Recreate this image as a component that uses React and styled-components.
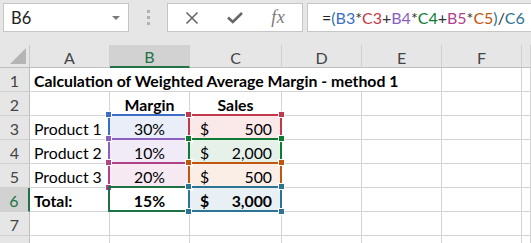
import styled, { createGlobalStyle, css } from "styled-components";

const GlobalStyle = createGlobalStyle`
  body {
    margin: 0;
    background: #fff;
    font-family: Lato, "Liberation Sans", sans-serif;
    overflow: hidden;
  }
`;

const REF = {
  blue: { line: "#3d6dc4", fill: "#e9eef8" },
  red: { line: "#c2394b", fill: "#fbe9ea" },
  purple: { line: "#8a5fbf", fill: "#f0ebf7" },
  green: { line: "#0e7a34", fill: "#e6f2e9" },
  magenta: { line: "#b0428a", fill: "#f7e9f2" },
  orange: { line: "#c1560f", fill: "#fbeee7" },
  teal: { line: "#2b7494", fill: "#e8f0f5" },
};

const formula = [
  ["=", "#222"],
  ["(", REF.teal.line],
  ["B3", REF.blue.line],
  ["*", "#333"],
  ["C3", REF.red.line],
  ["+", "#333"],
  ["B4", REF.purple.line],
  ["*", "#333"],
  ["C4", REF.green.line],
  ["+", "#333"],
  ["B5", REF.magenta.line],
  ["*", "#333"],
  ["C5", REF.orange.line],
  [")", REF.teal.line],
  ["/", "#333"],
  ["C6", REF.teal.line],
];

const columns = ["A", "B", "C", "D", "E", "F", ""];

// each row: [A, B, C] with options
const rows = [
  { n: 1, title: "Calculation of Weighted Average Margin - method 1" },
  { n: 2, a: "", b: "Margin", c: "Sales", head: true },
  { n: 3, a: "Product 1", b: "30%", c: "500", bRef: "blue", cRef: "red" },
  { n: 4, a: "Product 2", b: "10%", c: "2,000", bRef: "purple", cRef: "green" },
  { n: 5, a: "Product 3", b: "20%", c: "500", bRef: "magenta", cRef: "orange" },
  { n: 6, a: "Total:", b: "15%", c: "3,000", total: true, cRef: "teal" },
  { n: 7 },
  { n: 8, hideNum: true },
];

function App() {
  return (
    <>
      <GlobalStyle />
      <Toolbar>
        <NameBox>
          <span>B6</span>
          <Caret />
        </NameBox>
        <Grip>
          <i />
          <i />
          <i />
        </Grip>
        <ButtonBox>
          <IconSlot>
            <svg width="14" height="14" viewBox="0 0 14 14">
              <path d="M1.5 1.5 L12.5 12.5 M12.5 1.5 L1.5 12.5" stroke="#666" strokeWidth="1.6" fill="none" />
            </svg>
          </IconSlot>
          <IconSlot>
            <svg width="16" height="13" viewBox="0 0 16 13">
              <path d="M1 6.5 L5.8 11 L15 2" stroke="#666" strokeWidth="2.6" fill="none" />
            </svg>
          </IconSlot>
          <IconSlot>
            <Fx>fx</Fx>
          </IconSlot>
        </ButtonBox>
        <FormulaBox>
          {formula.map(([t, c], i) => (
            <span key={i} style={{ color: c }}>
              {t}
            </span>
          ))}
        </FormulaBox>
      </Toolbar>

      <Sheet>
        <Corner>
          <svg width="16" height="16" viewBox="0 0 16 16">
            <path d="M16 0 L16 16 L0 16 Z" fill="#b5b5b5" />
          </svg>
        </Corner>
        {columns.map((c) => (
          <ColHead key={c || "x"} selected={c === "B"}>
            {c}
          </ColHead>
        ))}

        {rows.map((r) => (
          <Row key={r.n} r={r} />
        ))}
      </Sheet>
    </>
  );
}

function Row({ r }) {
  const rest = r.title ? 2 : 4;
  return (
    <>
      <RowHead selected={r.n === 6}>{r.hideNum ? "" : r.n}</RowHead>
      {r.title ? (
        <Cell span={5}>
          <Title>{r.title}</Title>
        </Cell>
      ) : (
        <>
          <Cell bold={r.total}>{r.a}</Cell>
          <Cell align="center" bold={r.head || r.total} refc={r.bRef}>
            {r.b}
            {r.bRef && <Highlight color={REF[r.bRef].line} />}
            {r.total && <ActiveBorder />}
          </Cell>
          <Cell align={r.head ? "center" : "money"} bold={r.head || r.total} refc={r.cRef}>
            {r.c && !r.head && <span>$</span>}
            {r.c && <span>{r.c}</span>}
            {r.cRef && <Highlight color={REF[r.cRef].line} />}
          </Cell>
        </>
      )}
      {Array.from({ length: rest }).map((_, i) => (
        <Cell key={i} />
      ))}
    </>
  );
}

function Highlight({ color }) {
  return (
    <Frame color={color}>
      <Dot color={color} pos="tl" />
      <Dot color={color} pos="tr" />
      <Dot color={color} pos="bl" />
      <Dot color={color} pos="br" />
    </Frame>
  );
}

const Toolbar = styled.div`
  height: 45px;
  background: #e6e6e6;
  display: flex;
  align-items: flex-start;
  padding: 3px 0 0 3px;
  box-sizing: border-box;
`;

const Box = styled.div`
  height: 29px;
  box-sizing: border-box;
  background: #fff;
  border: 1px solid #c6c6c6;
  display: flex;
  align-items: center;
  font-size: 16.5px;
  color: #222;
`;

const NameBox = styled(Box)`
  width: 126px;
  padding: 0 8px 0 7px;
  justify-content: space-between;
`;

const Caret = styled.div`
  width: 0;
  height: 0;
  border-left: 4px solid transparent;
  border-right: 4px solid transparent;
  border-top: 4px solid #7a7a7a;
`;

const Grip = styled.div`
  width: 38px;
  height: 29px;
  display: flex;
  flex-direction: column;
  align-items: center;
  justify-content: center;
  gap: 3px;
  i {
    width: 3px;
    height: 3px;
    background: #b0b0b0;
  }
`;

const ButtonBox = styled(Box)`
  width: 136px;
  justify-content: space-around;
  padding: 0 2px;
`;

const IconSlot = styled.div`
  width: 45px;
  display: flex;
  justify-content: center;
  align-items: center;
`;

const Fx = styled.span`
  font-family: "Liberation Serif", serif;
  font-style: italic;
  font-size: 18px;
  color: #7a7a7a;
  letter-spacing: 0.5px;
`;

const FormulaBox = styled(Box)`
  flex: 1;
  margin-left: 4px;
  border-right: none;
  padding-left: 14px;
  white-space: nowrap;
  font-size: 16px;
`;

const Sheet = styled.div`
  display: grid;
  grid-template-columns: 30px 80px 80px 92px 80px 80px 80px 1fr;
  grid-template-rows: 23px repeat(8, 24px);
  font-size: 15.8px;
  color: #000;
`;

const headBase = css`
  background: #e6e6e6;
  box-sizing: border-box;
  display: flex;
  align-items: center;
  justify-content: center;
  color: #444;
  font-size: 16px;
`;

const Corner = styled.div`
  ${headBase};
  border-right: 1px solid #c9c9c9;
  border-bottom: 1px solid #bfbfbf;
  align-items: flex-end;
  justify-content: flex-end;
  padding: 0 3px 3px 0;
`;

const ColHead = styled.div`
  ${headBase};
  border-right: 1px solid #d0d0d0;
  border-bottom: 1px solid #bfbfbf;
  padding-top: 2px;
  ${({ selected }) =>
    selected &&
    css`
      background: #d2d2d2;
      color: #217346;
      border-bottom: 2px solid #217346;
    `}
`;

const RowHead = styled.div`
  ${headBase};
  border-right: 1px solid #bfbfbf;
  border-bottom: 1px solid #d0d0d0;
  padding-top: 1px;
  ${({ selected }) =>
    selected &&
    css`
      background: #d2d2d2;
      color: #217346;
      border-right: 2px solid #217346;
    `}
`;

const Cell = styled.div`
  position: relative;
  box-sizing: border-box;
  border-right: 1px solid #d4d4d4;
  border-bottom: 1px solid #d4d4d4;
  display: flex;
  align-items: center;
  padding: 1px 4px 0;
  white-space: nowrap;
  grid-column: ${({ span }) => (span ? `span ${span}` : "auto")};
  background: ${({ refc }) => (refc ? REF[refc].fill : "#fff")};
  font-weight: ${({ bold }) => (bold ? 700 : 400)};
  ${({ align }) =>
    align === "center" &&
    css`
      justify-content: center;
    `}
  ${({ align }) =>
    align === "money" &&
    css`
      justify-content: space-between;
      padding: 1px 9px 0 10px;
    `}
`;

const Title = styled.span`
  font-weight: 700;
`;

const Frame = styled.div`
  position: absolute;
  left: -2px;
  top: -2px;
  right: -1px;
  bottom: -1px;
  border: 2px solid ${({ color }) => color};
  z-index: 1;
`;

const dotPos = {
  tl: "top: -4px; left: -4px;",
  tr: "top: -4px; right: -4px;",
  bl: "bottom: -4px; left: -4px;",
  br: "bottom: -4px; right: -4px;",
};

const Dot = styled.div`
  position: absolute;
  width: 5px;
  height: 5px;
  background: ${({ color }) => color};
  box-shadow: 0 0 0 1px #fff;
  ${({ pos }) => dotPos[pos]};
`;

const ActiveBorder = styled.div`
  position: absolute;
  left: -2px;
  top: -2px;
  right: -1px;
  bottom: -1px;
  border: 2px solid #1f7145;
  z-index: 1;
`;

export default App;
